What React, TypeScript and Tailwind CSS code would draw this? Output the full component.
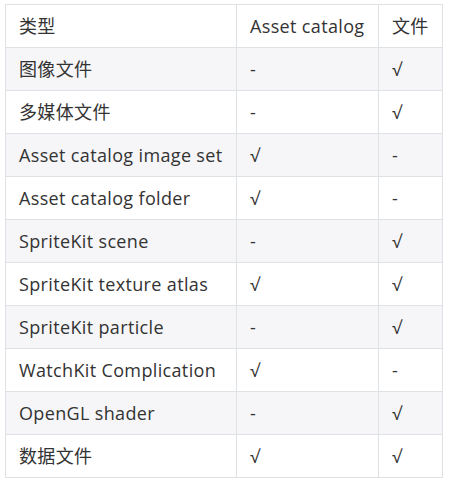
import React from "react";

const rows: [string, string, string][] = [
  ["图像文件", "-", "√"],
  ["多媒体文件", "-", "√"],
  ["Asset catalog image set", "√", "-"],
  ["Asset catalog folder", "√", "-"],
  ["SpriteKit scene", "-", "√"],
  ["SpriteKit texture atlas", "√", "√"],
  ["SpriteKit particle", "-", "√"],
  ["WatchKit Complication", "√", "-"],
  ["OpenGL shader", "-", "√"],
  ["数据文件", "√", "√"],
];

export default function App() {
  return (
    <div
      className="w-[450px] h-[482px] bg-white pt-[4px] pl-[5px] text-[#333] text-[18px] tracking-[0.35px]"
      style={{ fontFamily: '"Open Sans", "Noto Sans CJK SC", sans-serif' }}
    >
      <table className="border-collapse table-fixed w-[437px]">
        <colgroup>
          <col className="w-[231px]" />
          <col className="w-[142px]" />
          <col className="w-[64px]" />
        </colgroup>
        <thead>
          <tr className="h-[43px] bg-white">
            <th className="border border-[#dfe2e5] px-[13px] py-0 text-left font-normal">类型</th>
            <th className="border border-[#dfe2e5] px-[13px] py-0 text-left font-normal">Asset catalog</th>
            <th className="border border-[#dfe2e5] px-[13px] py-0 text-left font-normal">文件</th>
          </tr>
        </thead>
        <tbody>
          {rows.map((r, i) => (
            <tr key={i} className={`h-[43px] ${i % 2 === 0 ? "bg-[#f6f6f8]" : "bg-white"}`}>
              <td className="border border-[#dfe2e5] px-[13px] py-0 whitespace-nowrap">{r[0]}</td>
              <td className="border border-[#dfe2e5] px-[13px] py-0">{r[1]}</td>
              <td className="border border-[#dfe2e5] px-[13px] py-0">{r[2]}</td>
            </tr>
          ))}
        </tbody>
      </table>
    </div>
  );
}
